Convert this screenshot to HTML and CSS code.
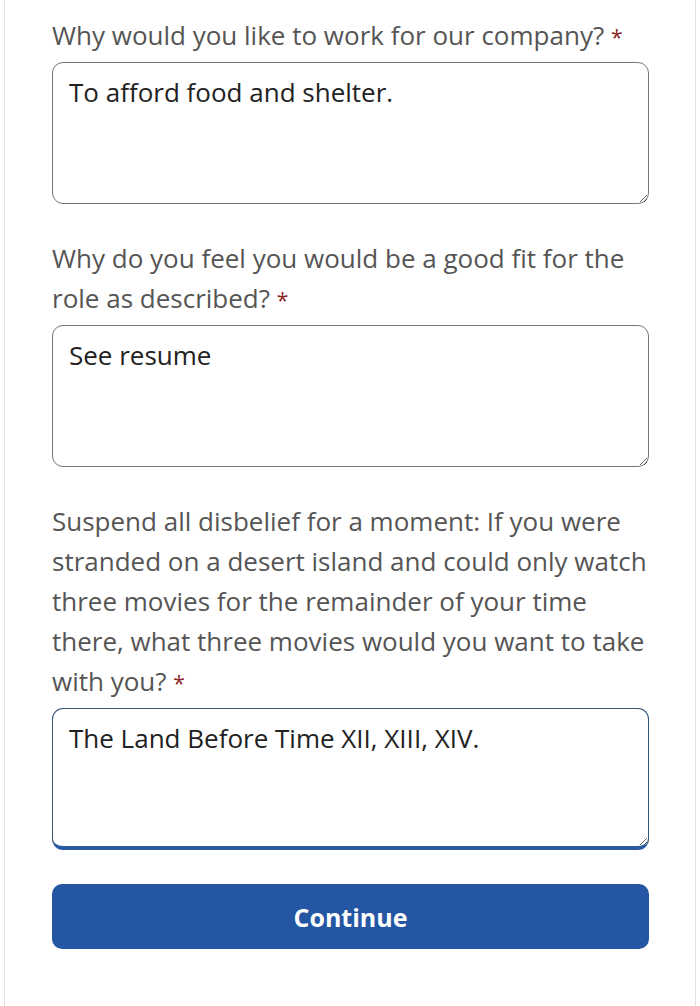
FILE: index.html
```html
<!DOCTYPE html>
<html lang="en">

<head>
    <meta charset="UTF-8">
    <meta name="viewport" content="width=device-width, initial-scale=1.0">
    <title>Application Questions</title>
    <link rel="stylesheet" href="styles.css">
</head>

<body>
    <div class="page">
        <form class="form">
            <div class="field">
                <label class="label" for="q1">Why would you like to work for our company? <span class="req">*</span></label>
                <textarea class="answer" id="q1">To afford food and shelter.</textarea>
            </div>

            <div class="field">
                <label class="label" for="q2">Why do you feel you would be a good fit for the role as described? <span class="req">*</span></label>
                <textarea class="answer" id="q2">See resume</textarea>
            </div>

            <div class="field">
                <label class="label" for="q3">Suspend all disbelief for a moment: If you were stranded on a desert island and could only watch three movies for the remainder of your time there, what three movies would you want to take with you? <span class="req">*</span></label>
                <textarea class="answer active" id="q3">The Land Before Time XII, XIII, XIV.</textarea>
            </div>

            <button type="button" class="continue-btn">Continue</button>
        </form>
    </div>
</body>

</html>
```

FILE: styles.css
```css
body {
    margin: 0;
    padding: 0;
    background-color: #fff;
    font-family: 'Open Sans', 'Noto Sans', sans-serif;
}

.page {
    margin: 0 4px;
    min-height: 1006px;
    border-left: 1px solid #e2e2e2;
    border-right: 1px solid #e2e2e2;
    box-sizing: border-box;
    padding: 15px 46px 0 47px;
}

.form {
    display: flex;
    flex-direction: column;
    gap: 34px;
}

.field {
    display: flex;
    flex-direction: column;
    gap: 7px;
}

.label {
    font-size: 26px;
    line-height: 40px;
    color: #555;
}

.req {
    color: #8b2525;
    font-size: 21px;
    line-height: 1;
}

.answer {
    display: block;
    width: 100%;
    height: 142px;
    box-sizing: border-box;
    resize: vertical;
    border: 1.5px solid #777;
    border-radius: 11px;
    padding: 9px 16px;
    font-family: 'Open Sans', 'Noto Sans', sans-serif;
    font-size: 26px;
    line-height: 40px;
    color: #222;
    background-color: #fff;
    outline: none;
}

.answer.active {
    border-color: #34557a;
    border-bottom: 4px solid #2a5aa3;
}

.continue-btn {
    width: 100%;
    height: 65px;
    border: none;
    border-radius: 10px;
    background-color: #2456a3;
    color: #fff;
    font-family: 'Open Sans', 'Noto Sans', sans-serif;
    font-size: 25px;
    font-weight: bold;
    cursor: pointer;
}
```
